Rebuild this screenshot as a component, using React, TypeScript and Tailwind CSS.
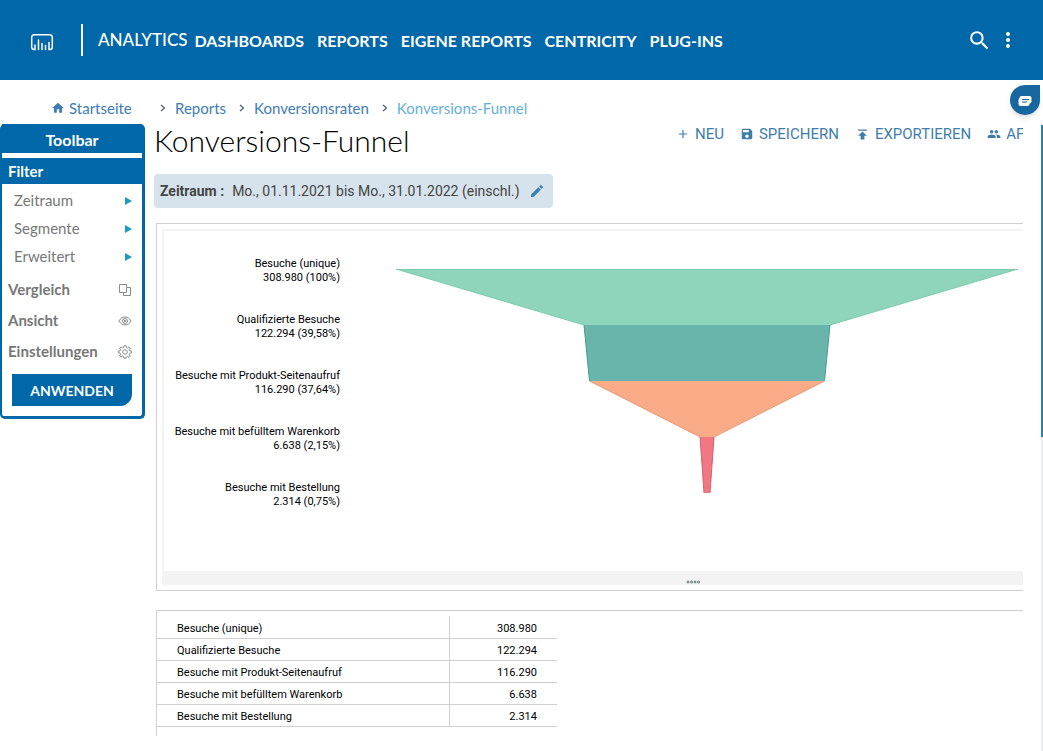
import React from "react";
import {
  MdAdd,
  MdEdit,
  MdGroup,
  MdHome,
  MdMoreVert,
  MdPublish,
  MdSave,
  MdSearch,
} from "react-icons/md";

const navItems = ["DASHBOARDS", "REPORTS", "EIGENE REPORTS", "CENTRICITY", "PLUG-INS"];

const steps = [
  { label: "Besuche (unique)", value: "308.980", share: "100%" },
  { label: "Qualifizierte Besuche", value: "122.294", share: "39,58%" },
  { label: "Besuche mit Produkt-Seitenaufruf", value: "116.290", share: "37,64%" },
  { label: "Besuche mit befülltem Warenkorb", value: "6.638", share: "2,15%" },
  { label: "Besuche mit Bestellung", value: "2.314", share: "0,75%" },
];

const funnelSegments = [
  { area: "M0 0H622L434 56H188z", sides: "M0 0L188 56M622 0L434 56M0 .5H622", fill: "#8fd5bb", stroke: "#7bcbab" },
  { area: "M188 56H434L428.500 112H193.500z", sides: "M188 56L193.500 112M434 56L428.500 112", fill: "#69b5ab", stroke: "#439c90" },
  { area: "M193.500 112H428.500L318 168H304z", sides: "M193.500 112L304 168M428.500 112L318 168", fill: "#f9aa87", stroke: "#ea9a72" },
  { area: "M304 168H318L314 224H308z", sides: "M304 168L308 224M318 168L314 224", fill: "#f17882", stroke: "#d4606e" },
];

function Logo() {
  return (
    <svg width="24" height="18" viewBox="0 0 24 18" fill="none" stroke="#fff" strokeWidth="1.5" strokeLinecap="round">
      <path d="M5 12v4.500H4.200A2.500 2.500 0 0 1 1.700 14V4.200A2.500 2.500 0 0 1 4.200 1.700h15.600a2.500 2.500 0 0 1 2.500 2.500V14a2.500 2.500 0 0 1-2.500 2.500H19V9.500" />
      <path d="M8.500 16.500V7M12 16.500V10.500M15.500 16.500V12.500" />
    </svg>
  );
}

function Header() {
  return (
    <header className="flex h-20 items-center bg-[#0067a8] pl-[30px] pr-[23px] font-['Lato',sans-serif] text-white">
      <a href="#start" aria-label="Start" className="pt-1">
        <Logo />
      </a>
      <span className="ml-[27px] h-8 w-0.5 bg-white" />
      <a href="#analytics" className="ml-[15px] text-[17px] font-medium">
        ANALYTICS
      </a>
      <nav className="ml-[7px] flex gap-[13px] pt-px text-[16px] font-bold">
        {navItems.map((item) => (
          <a key={item} href="#nav" className="whitespace-nowrap">
            {item}
          </a>
        ))}
      </nav>
      <div className="ml-auto flex items-center gap-1">
        <button type="button" aria-label="Suche">
          <MdSearch size={25} />
        </button>
        <button type="button" aria-label="Mehr">
          <MdMoreVert size={24} />
        </button>
      </div>
    </header>
  );
}

function Chevron() {
  return (
    <svg width="6" height="8" viewBox="0 0 6 8" fill="none" stroke="#4b5f73" strokeWidth="1.2">
      <path d="M1 1l3.500 3L1 7" />
    </svg>
  );
}

function Breadcrumb() {
  return (
    <nav className="flex h-11 items-center pl-[51px] pt-3 font-['Lato',sans-serif] text-[15px] text-[#3f7cb3]">
      <a href="#home" className="flex w-[109px] items-center gap-1">
        <MdHome size={14} />
        Startseite
      </a>
      <Chevron />
      <a href="#reports" className="ml-[9px] mr-[13px]">Reports</a>
      <Chevron />
      <a href="#rates" className="ml-[9px] mr-[13px]">Konversionsraten</a>
      <Chevron />
      <a href="#funnel" className="ml-[9px] text-[#64b0d8]">Konversions-Funnel</a>
    </nav>
  );
}

function CompareIcon() {
  return (
    <svg width="14" height="14" viewBox="0 0 14 14" fill="none" stroke="#8a8a8a">
      <path d="M5.500 9.500h-4v-8h7v3M8.500 4.500h4v8h-7v-3h3z" />
    </svg>
  );
}

function EyeIcon() {
  return (
    <svg width="14" height="14" viewBox="0 0 14 14" fill="none" stroke="#8a8a8a">
      <path d="M.8 7C2.500 4.300 4.600 3 7 3s4.500 1.300 6.200 4c-1.700 2.700-3.800 4-6.200 4S2.500 9.700.8 7z" />
      <circle cx="7" cy="7" r="2.500" />
      <circle cx="7" cy="7" r=".8" fill="#8a8a8a" />
    </svg>
  );
}

function GearIcon() {
  return (
    <svg width="14" height="14" viewBox="0 0 14 14" fill="none" stroke="#8a8a8a" strokeLinejoin="round">
      <path d="M6 .7h2l.3 1.700 1.300.5 1.400-1L12.300 3.200l-1 1.400.5 1.300 1.600.3v1.900l-1.600.3-.5 1.300 1 1.400-1.300 1.300-1.400-1-1.300.5L8 13.300H6l-.3-1.700-1.300-.5-1.400 1-1.300-1.300 1-1.400-.5-1.300L.6 7.900V6.100l1.600-.3.5-1.300-1-1.400L3 1.900l1.400 1 1.300-.5z" />
      <circle cx="7" cy="7" r="2.300" />
    </svg>
  );
}

function Sidebar() {
  const sections = [
    { label: "Vergleich", icon: <CompareIcon /> },
    { label: "Ansicht", icon: <EyeIcon /> },
    { label: "Einstellungen", icon: <GearIcon /> },
  ];
  return (
    <aside className="w-[145px] shrink-0 rounded-[5px] border-b-[3px] border-l-2 border-r-[3px] border-[#0067a8] bg-white font-['Lato',sans-serif] text-[15px]">
      <h2 className="h-[29px] bg-[#0067a8] pt-1 text-center text-[16px] font-bold text-white">Toolbar</h2>
      <h3 className="mt-[5px] h-[26px] bg-[#0067a8] pl-1.5 font-bold leading-[26px] text-white">Filter</h3>
      <ul className="pt-0.5 text-[#777]">
        {["Zeitraum", "Segmente", "Erweitert"].map((item) => (
          <li key={item}>
            <button type="button" className="flex h-7 w-full items-center justify-between pl-3 pr-[10px]">
              {item}
              <svg width="8" height="10" viewBox="0 0 8 10" fill="#1c9bc4">
                <path d="M1 2l7 4-7 4z" />
              </svg>
            </button>
          </li>
        ))}
      </ul>
      <ul className="pt-1 font-bold text-[#777]">
        {sections.map(({ label, icon }) => (
          <li key={label}>
            <button type="button" className="flex h-[31px] w-full items-center justify-between pl-1.5 pr-[10px]">
              {label}
              {icon}
            </button>
          </li>
        ))}
      </ul>
      <div className="px-[10px] pb-[10px] pt-[7px]">
        <button
          type="button"
          className="block h-8 w-full rounded-br-xl bg-[#0067a8] text-[14px] font-bold text-white"
        >
          ANWENDEN
        </button>
      </div>
    </aside>
  );
}

function Actions() {
  const actions = [
    { label: "NEU", icon: <MdAdd size={14} /> },
    { label: "SPEICHERN", icon: <MdSave size={14} /> },
    { label: "EXPORTIEREN", icon: <MdPublish size={15} /> },
    { label: "AF", icon: <MdGroup size={14} /> },
  ];
  return (
    <div className="flex w-[347px] shrink-0 gap-4 overflow-hidden text-[15px] text-[#3f7dab]">
      {actions.map(({ label, icon }) => (
        <button key={label} type="button" className="flex h-5 shrink-0 items-center gap-[5px]">
          {icon}
          {label}
        </button>
      ))}
    </div>
  );
}

function Funnel() {
  return (
    <section className="border border-r-0 border-[#d0d0d0] py-[5px] pl-[5px]">
      <div className="border-l-2 border-t-2 border-[#f3f3f3] pt-[26px]">
        <div className="flex h-[314px] pr-[5px]">
          <ul className="w-[176px] shrink-0 text-right text-[11px] leading-[14px] text-black">
            {steps.map((s) => (
              <li key={s.label} className="h-14 whitespace-nowrap">
                {s.label}
                <br />
                {s.value} ({s.share})
              </li>
            ))}
          </ul>
          <svg
            className="ml-14 mt-3 h-[224px] min-w-0 flex-1"
            viewBox="0 0 622 224"
            preserveAspectRatio="none"
            role="img"
            aria-label="Funnel"
          >
            {funnelSegments.map((s) => (
              <g key={s.fill}>
                <path d={s.area} fill={s.fill} />
                <path d={s.sides} fill="none" stroke={s.stroke} />
              </g>
            ))}
          </svg>
        </div>
        <div className="flex h-[14px] items-center justify-center bg-[#f3f3f3] pl-[199px] pt-2">
          <svg width="14" height="4" viewBox="0 0 14 4" fill="none" stroke="#55756f">
            <circle cx="2" cy="2" r="1" />
            <circle cx="5.500" cy="2" r="1" />
            <circle cx="9" cy="2" r="1" />
            <circle cx="12.500" cy="2" r="1" />
          </svg>
        </div>
      </div>
    </section>
  );
}

function StepTable() {
  return (
    <section className="mt-[19px] h-[126px] border-l border-t border-[#d0d0d0] pt-[5px]">
      <table className="w-[400px] border-collapse text-[11px] text-black">
        <tbody>
          {steps.map((s) => (
            <tr key={s.label} className="h-[22px] border-b border-[#d0d0d0]">
              <th scope="row" className="w-[292px] border-r border-[#d0d0d0] p-0 pl-5 pt-1 text-left font-normal leading-4">
                {s.label}
              </th>
              <td className="p-0 pr-5 pt-1 text-right leading-4">{s.value}</td>
            </tr>
          ))}
        </tbody>
      </table>
    </section>
  );
}

export default function App() {
  return (
    <div className="relative flex min-h-screen flex-col bg-white font-['Roboto',sans-serif]">
      <Header />
      <Breadcrumb />
      <div className="flex flex-1 items-start">
        <Sidebar />
        <main className="min-w-0 flex-1 pl-[9px]">
          <div className="flex h-[50px] items-start justify-between">
            <h1 className="whitespace-nowrap font-['Lato',sans-serif] text-[30px] font-light leading-8 text-black">
              Konversions-Funnel
            </h1>
            <Actions />
          </div>
          <div className="flex h-[34px] w-fit items-center rounded bg-[#d6e3ec] pl-1.5 pr-2 text-[14px] text-[#444]">
            <strong>Zeitraum :</strong>
            <span className="ml-2">Mo., 01.11.2021 bis Mo., 31.01.2022 (einschl.)</span>
            <button type="button" aria-label="Zeitraum bearbeiten" className="ml-[9px] text-[#3a80b8]">
              <MdEdit size={16} />
            </button>
          </div>
          <div className="pl-0.5 pt-[15px]">
            <Funnel />
            <StepTable />
          </div>
        </main>
        <div className="ml-[18px] w-0.5 self-stretch bg-[#eceef1]">
          <div className="mt-px h-[312px] bg-[#2b7fb0]" />
        </div>
      </div>
      <button
        type="button"
        aria-label="Chat"
        className="absolute right-[3px] top-[85px] flex h-[30px] w-[30px] items-center justify-center rounded-full rounded-tr bg-[#1667a0] pt-0.5 shadow-md"
      >
        <svg width="14" height="12" viewBox="0 0 14 12">
          <rect x="1.500" y="1" width="12" height="7.500" rx="2" fill="#fff" />
          <rect x="0.500" y="3" width="11" height="8" rx="2" fill="#fff" />
          <path d="M4 4.500h7M4 7h5" stroke="#1667a0" strokeWidth="1.200" />
        </svg>
      </button>
    </div>
  );
}
